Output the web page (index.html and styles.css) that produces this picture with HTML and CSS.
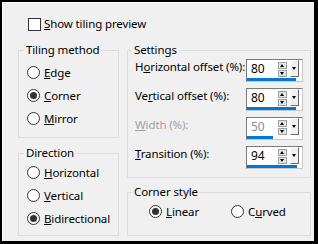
FILE: index.html
```html
<!DOCTYPE html>
<html lang="en">
  <head>
    <meta charset="UTF-8" />
    <title>Tiling</title>
    <link rel="stylesheet" href="styles.css">
  </head>
  <body>
    <div class="dialog">
      <div class="check-row">
        <span class="checkbox"></span>
        <span><u>S</u>how tiling preview</span>
      </div>

      <div class="columns">
        <div class="col col-left">
          <fieldset class="group group-tiling">
            <legend>Tiling method</legend>
            <div class="radio-row"><span class="radio"></span><span><u>E</u>dge</span></div>
            <div class="radio-row"><span class="radio checked"></span><span><u>C</u>orner</span></div>
            <div class="radio-row"><span class="radio"></span><span><u>M</u>irror</span></div>
          </fieldset>

          <fieldset class="group group-direction">
            <legend>Direction</legend>
            <div class="radio-row"><span class="radio"></span><span><u>H</u>orizontal</span></div>
            <div class="radio-row"><span class="radio"></span><span><u>V</u>ertical</span></div>
            <div class="radio-row"><span class="radio checked"></span><span><u>B</u>idirectional</span></div>
          </fieldset>
        </div>

        <div class="col col-right">
          <fieldset class="group group-settings">
            <legend>Settings</legend>
            <div class="field-row">
              <span class="field-label">H<u>o</u>rizontal offset (%):</span>
              <div class="spin">
                <div class="spin-top">
                  <span class="spin-value">80</span>
                  <span class="spin-arrows"><span class="arrow-up"></span><span class="arrow-down"></span></span>
                  <span class="spin-drop"></span>
                </div>
                <div class="spin-bar" style="width: 49px"></div>
              </div>
            </div>
            <div class="field-row">
              <span class="field-label">Ve<u>r</u>tical offset (%):</span>
              <div class="spin">
                <div class="spin-top">
                  <span class="spin-value">80</span>
                  <span class="spin-arrows"><span class="arrow-up"></span><span class="arrow-down"></span></span>
                  <span class="spin-drop"></span>
                </div>
                <div class="spin-bar" style="width: 49px"></div>
              </div>
            </div>
            <div class="field-row disabled">
              <span class="field-label"><u>W</u>idth (%):</span>
              <div class="spin">
                <div class="spin-top">
                  <span class="spin-value">50</span>
                  <span class="spin-arrows"><span class="arrow-up"></span><span class="arrow-down"></span></span>
                  <span class="spin-drop"></span>
                </div>
                <div class="spin-bar" style="width: 26px"></div>
              </div>
            </div>
            <div class="field-row">
              <span class="field-label"><u>T</u>ransition (%):</span>
              <div class="spin">
                <div class="spin-top">
                  <span class="spin-value">94</span>
                  <span class="spin-arrows"><span class="arrow-up"></span><span class="arrow-down"></span></span>
                  <span class="spin-drop"></span>
                </div>
                <div class="spin-bar" style="width: 50px"></div>
              </div>
            </div>
          </fieldset>

          <fieldset class="group group-corner">
            <legend>Corner style</legend>
            <div class="corner-row">
              <div class="radio-row item-linear"><span class="radio checked"></span><span><u>L</u>inear</span></div>
              <div class="radio-row"><span class="radio"></span><span>C<u>u</u>rved</span></div>
            </div>
          </fieldset>
        </div>
      </div>
    </div>
  </body>
</html>
```

FILE: styles.css
```css
body {
  margin: 0;
  padding: 0;
  background-color: #000;
  font-family: "Noto Sans", "Open Sans", sans-serif;
  font-size: 11.5px;
  letter-spacing: -0.12px;
  line-height: 16px;
  color: #000;
}

.dialog {
  box-sizing: border-box;
  width: 312px;
  height: 239px;
  margin: 2px 0 0 2px;
  background-color: #f0f0f0;
  border-top: 1px solid #fff;
  border-left: 1px solid #fff;
  padding: 13px 0 0 15px;
}

.check-row {
  display: flex;
  align-items: center;
  gap: 3px;
  margin-left: 10px;
  height: 16px;
}

.checkbox {
  box-sizing: border-box;
  width: 13px;
  height: 13px;
  border: 1px solid #333;
  background-color: #fff;
}

.columns {
  display: flex;
  gap: 8px;
  margin-top: 10px;
}

.col {
  display: flex;
  flex-direction: column;
}

.col-left {
  width: 101px;
  gap: 7px;
}

.col-right {
  width: 184px;
  gap: 6px;
}

/* Group boxes */
.group {
  box-sizing: border-box;
  margin: 0;
  border: 1px solid #dcdcdc;
  padding: 0 7px 0 8px;
  min-width: 0;
}

.group legend {
  padding: 0 2px;
  margin-left: -3px;
  line-height: 16px;
}

.group-tiling {
  height: 96px;
  padding-top: 3px;
}

.group-direction {
  height: 91px;
}

.group-settings {
  height: 136px;
  padding-left: 7px;
  padding-top: 1px;
}

.group-corner {
  height: 52px;
  padding-left: 7px;
}

/* Radio buttons */
.radio-row {
  display: flex;
  align-items: center;
  gap: 4px;
  height: 23px;
  white-space: nowrap;
}

.radio {
  box-sizing: border-box;
  width: 13px;
  height: 13px;
  border: 1px solid #333;
  border-radius: 50%;
  background-color: #fff;
  display: flex;
  align-items: center;
  justify-content: center;
}

.radio.checked::after {
  content: "";
  width: 7px;
  height: 7px;
  border-radius: 50%;
  background-color: #333;
}

.corner-row {
  display: flex;
  padding-left: 14px;
}

.item-linear {
  width: 82px;
}

/* Spin fields */
.field-row {
  display: flex;
  justify-content: space-between;
  align-items: flex-start;
  height: 23px;
  margin-bottom: 6px;
}

.field-label {
  white-space: nowrap;
}

.field-row.disabled .field-label {
  color: #a0a0a0;
}

.field-row.disabled .spin-value {
  color: #8d8d8d;
}

.spin {
  box-sizing: border-box;
  flex: none;
  width: 57px;
  height: 23px;
  border: 1px solid #7a7a7a;
  border-right-color: #c8c8c8;
  border-bottom-color: #c8c8c8;
  background-color: #fff;
}

.spin-top {
  display: flex;
  height: 18px;
}

.spin-value {
  width: 27px;
  padding: 1px 0 0 4px;
  font-size: 12px;
}

.spin-arrows {
  display: flex;
  flex-direction: column;
  gap: 1px;
  width: 9px;
  margin-top: 2px;
}

.arrow-up,
.arrow-down {
  box-sizing: border-box;
  position: relative;
  height: 7px;
  background-color: #e6e6e6;
  border: 1px solid #a0a0a0;
}

.arrow-up::after,
.arrow-down::after {
  content: "";
  position: absolute;
  left: 1px;
  border-left: 2.5px solid transparent;
  border-right: 2.5px solid transparent;
}

.arrow-up::after {
  top: 1px;
  border-bottom: 3px solid #000;
}

.arrow-down::after {
  top: 1px;
  border-top: 3px solid #000;
}

.spin-drop {
  box-sizing: border-box;
  position: relative;
  width: 9px;
  height: 17px;
  margin: 0 0 0 3px;
  background-color: #f0f0f0;
  border: 1px solid #fff;
  border-right-color: #696969;
  border-bottom-color: #696969;
}

.spin-drop::after {
  content: "";
  position: absolute;
  top: 6px;
  left: 1px;
  border-left: 2.5px solid transparent;
  border-right: 2.5px solid transparent;
  border-top: 3px solid #000;
}

.spin-bar {
  height: 3px;
  background-color: #0078d7;
}
```
